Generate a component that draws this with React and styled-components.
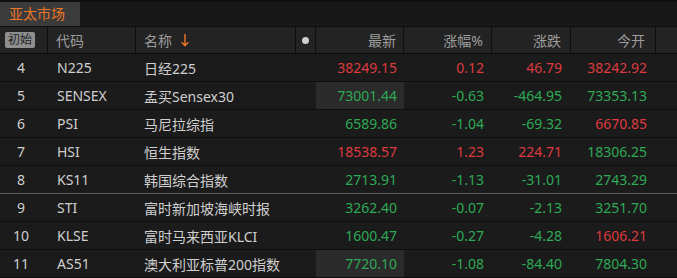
import React from 'react';
import styled, { createGlobalStyle } from 'styled-components';

const GlobalStyle = createGlobalStyle`
  html, body {
    margin: 0;
    padding: 0;
    background: #1b1b1b;
  }
  body {
    font-family: "Noto Sans", "Noto Sans CJK SC", sans-serif;
  }
`;

const COLS = '48px 88px 160px 20px 88px 88px 79px 85px 1fr';

const Panel = styled.div`
  width: 677px;
  height: 278px;
  overflow: hidden;
  background: #1b1b1b;
`;

const TopBar = styled.div`
  height: 24px;
  border-top: 2px solid #0e0e0e;
  border-bottom: 1px solid #0c0c0c;
  background: #181818;
  display: flex;
`;

const Tab = styled.div`
  width: 80px;
  background: #3b3b3b;
  color: #ec7526;
  font-size: 14px;
  line-height: 24px;
  padding-left: 9px;
  box-sizing: border-box;
`;

const HeaderRow = styled.div`
  display: grid;
  grid-template-columns: ${COLS};
  height: 27px;
  box-sizing: border-box;
  border-bottom: 1px solid #0c0c0c;
  background: #232323;
`;

const HeadCell = styled.div`
  display: flex;
  align-items: center;
  justify-content: ${p => (p.$right ? 'flex-end' : p.$center ? 'center' : 'flex-start')};
  padding: ${p => (p.$right ? `0 ${p.$pr}px 0 0` : `0 0 0 ${p.$pl || 0}px`)};
  border-right: ${p => (p.$last ? 'none' : '1px solid #101010')};
  color: #9d9d9d;
  font-size: 14px;
  gap: 9px;
`;

const Badge = styled.span`
  display: inline-block;
  background: #8f8f8f;
  color: #1e1e1e;
  font-size: 12px;
  line-height: 16px;
  padding: 0 3px;
  border-radius: 2px;
`;

const Dot = styled.span`
  width: 7px;
  height: 7px;
  border-radius: 50%;
  background: #cfcfcf;
`;

const Row = styled.div`
  display: grid;
  grid-template-columns: ${COLS};
  height: 28px;
  box-sizing: border-box;
  border-bottom: 1px solid ${p => (p.$split ? '#5d5d5d' : '#0e0e0e')};
  background: #1b1b1b;
  font-size: 14px;
`;

const Cell = styled.div`
  display: flex;
  align-items: center;
  justify-content: ${p => (p.$right ? 'flex-end' : p.$center ? 'center' : 'flex-start')};
  padding: ${p => (p.$right ? `0 ${p.$pr}px 0 0` : p.$center ? '0 6px 0 0' : `0 0 0 ${p.$pl || 0}px`)};
  color: ${p => (p.$tone === 'up' ? '#df3a3f' : p.$tone === 'down' ? '#2ea956' : '#cfcfcf')};
  background: ${p => (p.$hl ? '#2b2b2b' : 'transparent')};
  white-space: nowrap;
`;

const SortArrow = () => (
  <svg width="8" height="14" viewBox="0 0 8 14">
    <path d="M4 1 V12.5 M0.8 9.3 L4 12.8 L7.2 9.3" stroke="#ec7526" strokeWidth="1.4" fill="none" />
  </svg>
);

const tone = (v, ref) => (v > ref ? 'up' : v < ref ? 'down' : null);

const rows = [
  { no: 4, code: 'N225', name: '日经225', last: '38249.15', pct: '0.12', chg: '46.79', open: '38242.92' },
  { no: 5, code: 'SENSEX', name: '孟买Sensex30', last: '73001.44', pct: '-0.63', chg: '-464.95', open: '73353.13', hl: true },
  { no: 6, code: 'PSI', name: '马尼拉综指', last: '6589.86', pct: '-1.04', chg: '-69.32', open: '6670.85' },
  { no: 7, code: 'HSI', name: '恒生指数', last: '18538.57', pct: '1.23', chg: '224.71', open: '18306.25' },
  { no: 8, code: 'KS11', name: '韩国综合指数', last: '2713.91', pct: '-1.13', chg: '-31.01', open: '2743.29', split: true },
  { no: 9, code: 'STI', name: '富时新加坡海峡时报', last: '3262.40', pct: '-0.07', chg: '-2.13', open: '3251.70' },
  { no: 10, code: 'KLSE', name: '富时马来西亚KLCI', last: '1600.47', pct: '-0.27', chg: '-4.28', open: '1606.21' },
  { no: 11, code: 'AS51', name: '澳大利亚标普200指数', last: '7720.10', pct: '-1.08', chg: '-84.40', open: '7804.30', hl: true },
];

export default function App() {
  return (
    <Panel>
      <GlobalStyle />
      <TopBar>
        <Tab>亚太市场</Tab>
      </TopBar>
      <HeaderRow>
        <HeadCell $pl={5}><Badge>初始</Badge></HeadCell>
        <HeadCell $pl={8}>代码</HeadCell>
        <HeadCell $pl={8}>名称<SortArrow /></HeadCell>
        <HeadCell $center><Dot /></HeadCell>
        <HeadCell $right $pr={7}>最新</HeadCell>
        <HeadCell $right $pr={8}>涨幅%</HeadCell>
        <HeadCell $right $pr={9}>涨跌</HeadCell>
        <HeadCell $right $pr={10}>今开</HeadCell>
        <HeadCell $last />
      </HeaderRow>
      {rows.map(r => {
        const prev = parseFloat(r.last) - parseFloat(r.chg);
        const t = tone(parseFloat(r.chg), 0);
        return (
          <Row key={r.no} $split={r.split}>
            <Cell $center>{r.no}</Cell>
            <Cell $pl={9}>{r.code}</Cell>
            <Cell $pl={8}>{r.name}</Cell>
            <Cell />
            <Cell $right $pr={7} $tone={t} $hl={r.hl}>{r.last}</Cell>
            <Cell $right $pr={8} $tone={t}>{r.pct}</Cell>
            <Cell $right $pr={9} $tone={t}>{r.chg}</Cell>
            <Cell $right $pr={9} $tone={tone(parseFloat(r.open), prev)}>{r.open}</Cell>
            <Cell />
          </Row>
        );
      })}
    </Panel>
  );
}
